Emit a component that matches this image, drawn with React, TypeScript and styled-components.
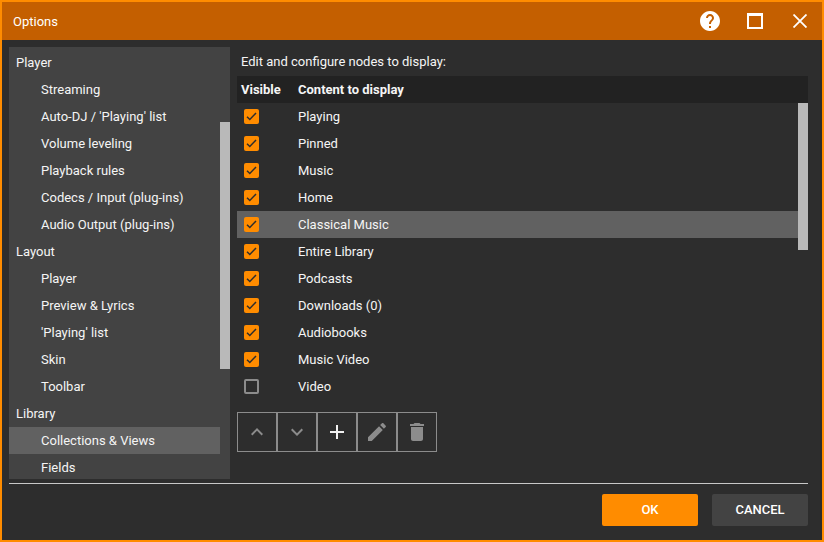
import React from 'react';
import styled, { createGlobalStyle } from 'styled-components';

const GlobalStyle = createGlobalStyle`
  html, body {
    margin: 0;
    padding: 0;
    background: #2d2d2d;
  }
  * {
    box-sizing: border-box;
  }
`;

const Window = styled.div`
  width: 824px;
  height: 542px;
  border: 2px solid #ff8c00;
  background: #2d2d2d;
  color: #f5f5f5;
  font-family: Roboto, "Liberation Sans", sans-serif;
  font-size: 13px;
  display: flex;
  flex-direction: column;
  overflow: hidden;
`;

const TitleBar = styled.div`
  height: 38px;
  flex: none;
  background: #c45f00;
  display: flex;
  align-items: center;
  padding-left: 11px;
`;

const Title = styled.div`
  flex: 1;
  font-size: 13px;
  color: #fff;
`;

const TitleButton = styled.div`
  width: 45px;
  height: 38px;
  display: flex;
  align-items: center;
  justify-content: center;
  color: #fff;
`;

const Main = styled.div`
  flex: none;
  height: 432px;
  margin-top: 7px;
  padding: 0 14px 0 7px;
  display: flex;
  gap: 7px;
`;

const Sidebar = styled.div`
  width: 221px;
  flex: none;
  background: #434343;
  padding-top: 2px;
  position: relative;
  overflow: hidden;
`;

const NavRow = styled.div<{ $child?: boolean; $selected?: boolean }>`
  width: 211px;
  height: 27px;
  flex: none;
  display: flex;
  align-items: center;
  padding-left: ${p => (p.$child ? '32px' : '7px')};
  background: ${p => (p.$selected ? '#616161' : 'transparent')};
`;

const Thumb = styled.div<{ $top: number; $height: number }>`
  position: absolute;
  right: 0;
  top: ${p => p.$top}px;
  width: 10px;
  height: ${p => p.$height}px;
  background: #b9b9b9;
`;

const Content = styled.div`
  flex: 1;
  min-width: 0;
  display: flex;
  flex-direction: column;
`;

const Caption = styled.div`
  height: 29px;
  flex: none;
  padding: 7px 0 0 4px;
  line-height: 15px;
`;

const HeaderRow = styled.div`
  height: 27px;
  flex: none;
  background: #222222;
  display: flex;
  align-items: center;
  font-weight: 700;
  color: #f5f5f5;
`;

const VisibleCell = styled.div`
  width: 61px;
  flex: none;
  padding-left: 4px;
`;

const List = styled.div`
  position: relative;
  height: 297px;
  flex: none;
`;

const Row = styled.div<{ $selected?: boolean }>`
  width: 561px;
  height: 27px;
  display: flex;
  align-items: center;
  background: ${p => (p.$selected ? '#616161' : 'transparent')};
`;

const CheckCell = styled.div`
  width: 61px;
  flex: none;
  padding-left: 7px;
  display: flex;
  align-items: center;
`;

const Check = styled.div<{ $on: boolean }>`
  width: 15px;
  height: 15px;
  border-radius: 2px;
  background: ${p => (p.$on ? '#ff8c00' : 'transparent')};
  border: ${p => (p.$on ? 'none' : '2px solid #8c8c8c')};
  display: flex;
  align-items: center;
  justify-content: center;
`;

const Toolbar = styled.div`
  display: flex;
  margin-top: 12px;
`;

const ToolButton = styled.div<{ $active?: boolean }>`
  width: 40px;
  height: 40px;
  display: flex;
  align-items: center;
  justify-content: center;
  border: 1px solid #8c8c8c;
  color: ${p => (p.$active ? '#f0f0f0' : '#8c8c8c')};
`;

const Divider = styled.div`
  height: 1px;
  flex: none;
  margin: 4px 14px 0 7px;
  background: #c8c8c8;
`;

const Footer = styled.div`
  display: flex;
  justify-content: flex-end;
  gap: 14px;
  padding: 10px 14px 0 0;
`;

const DialogButton = styled.div<{ $primary?: boolean }>`
  width: 96px;
  height: 32px;
  padding-bottom: 2px;
  border-radius: 2px;
  background: ${p => (p.$primary ? '#ff8c00' : '#434343')};
  color: #fff;
  font-size: 13px;
  font-weight: 500;
  display: flex;
  align-items: center;
  justify-content: center;
`;

const nav: { label: string; child?: boolean; selected?: boolean }[] = [
  { label: 'Player' },
  { label: 'Streaming', child: true },
  { label: "Auto-DJ / 'Playing' list", child: true },
  { label: 'Volume leveling', child: true },
  { label: 'Playback rules', child: true },
  { label: 'Codecs / Input (plug-ins)', child: true },
  { label: 'Audio Output (plug-ins)', child: true },
  { label: 'Layout' },
  { label: 'Player', child: true },
  { label: 'Preview & Lyrics', child: true },
  { label: "'Playing' list", child: true },
  { label: 'Skin', child: true },
  { label: 'Toolbar', child: true },
  { label: 'Library' },
  { label: 'Collections & Views', child: true, selected: true },
  { label: 'Fields', child: true },
];

const nodes: { label: string; on: boolean; selected?: boolean }[] = [
  { label: 'Playing', on: true },
  { label: 'Pinned', on: true },
  { label: 'Music', on: true },
  { label: 'Home', on: true },
  { label: 'Classical Music', on: true, selected: true },
  { label: 'Entire Library', on: true },
  { label: 'Podcasts', on: true },
  { label: 'Downloads (0)', on: true },
  { label: 'Audiobooks', on: true },
  { label: 'Music Video', on: true },
  { label: 'Video', on: false },
];

const MuiIcon = ({ d, size }: { d: string; size: number }) => (
  <svg width={size} height={size} viewBox="0 0 24 24" fill="currentColor">
    <path d={d} />
  </svg>
);

const HELP =
  'M12 2C6.48 2 2 6.48 2 12s4.48 10 10 10 10-4.48 10-10S17.52 2 12 2zm1 17h-2v-2h2v2zm2.07-7.75l-.9.92C13.45 12.9 13 13.5 13 15h-2v-.5c0-1.1.45-2.1 1.17-2.83l1.24-1.26c.37-.36.59-.86.59-1.41 0-1.1-.9-2-2-2s-2 .9-2 2H8c0-2.21 1.79-4 4-4s4 1.79 4 4c0 .88-.36 1.68-.93 2.25z';
const UP = 'M12 8l-6 6 1.41 1.41L12 10.83l4.59 4.58L18 14z';
const DOWN = 'M16.59 8.59L12 13.17 7.41 8.59 6 10l6 6 6-6z';
const ADD = 'M19 13h-6v6h-2v-6H5v-2h6V5h2v6h6v2z';
const EDIT =
  'M3 17.25V21h3.75L17.81 9.94l-3.75-3.75L3 17.25zM20.71 7.04c.39-.39.39-1.02 0-1.41l-2.34-2.34c-.39-.39-1.02-.39-1.41 0l-1.83 1.83 3.75 3.75 1.83-1.83z';
const TRASH =
  'M6 19c0 1.1.9 2 2 2h8c1.1 0 2-.9 2-2V7H6v12zM19 4h-3.5l-1-1h-5l-1 1H5v2h14V4z';

const CheckMark = () => (
  <svg width="11" height="9" viewBox="0 0 11 9" fill="none">
    <path d="M1 4.8L3.8 7.5L10 1" stroke="#2d2d2d" strokeWidth="1.5" />
  </svg>
);

export default function App() {
  return (
    <>
      <GlobalStyle />
      <Window>
        <TitleBar>
          <Title>Options</Title>
          <TitleButton>
            <MuiIcon d={HELP} size={24} />
          </TitleButton>
          <TitleButton>
            <svg width="16" height="16" viewBox="0 0 16 16" fill="none">
              <path d="M1 1h14v14H1z" stroke="currentColor" strokeWidth="2" />
              <path d="M0 1.5h16" stroke="currentColor" strokeWidth="3" />
            </svg>
          </TitleButton>
          <TitleButton>
            <svg width="14" height="14" viewBox="0 0 14 14" fill="none">
              <path d="M0.5 0.5l13 13M13.5 0.5l-13 13" stroke="currentColor" strokeWidth="1.8" />
            </svg>
          </TitleButton>
        </TitleBar>
        <Main>
          <Sidebar>
            {nav.map((n, i) => (
              <NavRow key={i} $child={n.child} $selected={n.selected}>
                {n.label}
              </NavRow>
            ))}
            <Thumb $top={75} $height={247} />
          </Sidebar>
          <Content>
            <Caption>Edit and configure nodes to display:</Caption>
            <HeaderRow>
              <VisibleCell>Visible</VisibleCell>
              Content to display
            </HeaderRow>
            <List>
              {nodes.map(n => (
                <Row key={n.label} $selected={n.selected}>
                  <CheckCell>
                    <Check $on={n.on}>{n.on && <CheckMark />}</Check>
                  </CheckCell>
                  {n.label}
                </Row>
              ))}
              <Thumb $top={0} $height={147} />
            </List>
            <Toolbar>
              <ToolButton>
                <MuiIcon d={UP} size={24} />
              </ToolButton>
              <ToolButton>
                <MuiIcon d={DOWN} size={24} />
              </ToolButton>
              <ToolButton $active>
                <MuiIcon d={ADD} size={24} />
              </ToolButton>
              <ToolButton>
                <MuiIcon d={EDIT} size={24} />
              </ToolButton>
              <ToolButton>
                <MuiIcon d={TRASH} size={24} />
              </ToolButton>
            </Toolbar>
          </Content>
        </Main>
        <Divider />
        <Footer>
          <DialogButton $primary>OK</DialogButton>
          <DialogButton>CANCEL</DialogButton>
        </Footer>
      </Window>
    </>
  );
}
